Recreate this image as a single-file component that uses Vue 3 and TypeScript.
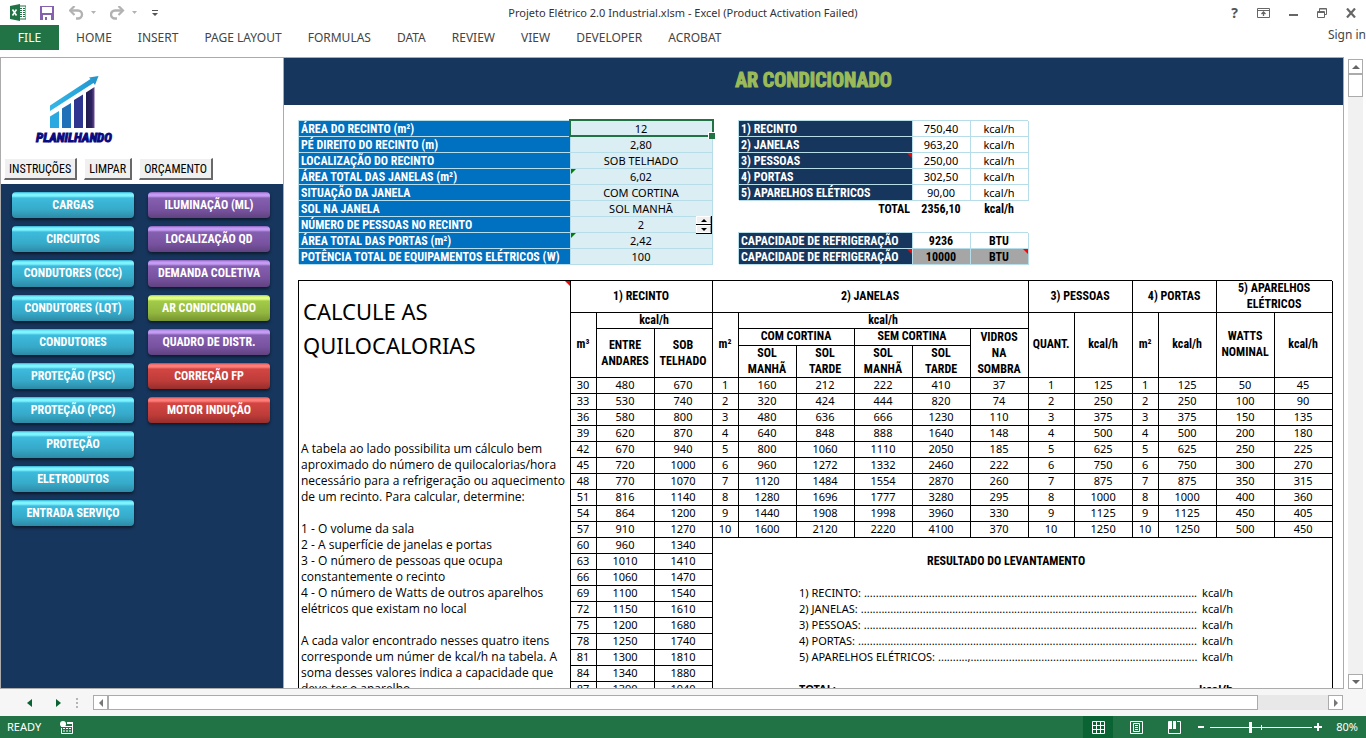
<script setup lang="ts">
import { ref } from 'vue'

const tabs = ['HOME', 'INSERT', 'PAGE LAYOUT', 'FORMULAS', 'DATA', 'REVIEW', 'VIEW', 'DEVELOPER', 'ACROBAT']

const blueLinks = [
  'CARGAS', 'CIRCUITOS', 'CONDUTORES (CCC)', 'CONDUTORES (LQT)', 'CONDUTORES',
  'PROTEÇÃO (PSC)', 'PROTEÇÃO (PCC)', 'PROTEÇÃO', 'ELETRODUTOS', 'ENTRADA SERVIÇO',
]
const otherLinks = [
  { label: 'ILUMINAÇÃO (ML)', tone: 'purple' },
  { label: 'LOCALIZAÇÃO QD', tone: 'purple' },
  { label: 'DEMANDA COLETIVA', tone: 'purple' },
  { label: 'AR CONDICIONADO', tone: 'green' },
  { label: 'QUADRO DE DISTR.', tone: 'purple' },
  { label: 'CORREÇÃO FP', tone: 'red' },
  { label: 'MOTOR INDUÇÃO', tone: 'red' },
]

const people = ref(2)
const zoom = ref(80)

const inputs = [
  { label: 'ÁREA DO RECINTO (m²)', value: '12', mark: 'selected' },
  { label: 'PÉ DIREITO DO RECINTO (m)', value: '2,80', mark: '' },
  { label: 'LOCALIZAÇÃO DO RECINTO', value: 'SOB TELHADO', mark: '' },
  { label: 'ÁREA TOTAL DAS JANELAS (m²)', value: '6,02', mark: 'flag' },
  { label: 'SITUAÇÃO DA JANELA', value: 'COM CORTINA', mark: '' },
  { label: 'SOL NA JANELA', value: 'SOL MANHÃ', mark: '' },
  { label: 'NÚMERO DE PESSOAS NO RECINTO', value: '', mark: 'spin' },
  { label: 'ÁREA TOTAL DAS PORTAS (m²)', value: '2,42', mark: 'flag' },
  { label: 'POTÊNCIA TOTAL DE EQUIPAMENTOS ELÉTRICOS (W)', value: '100', mark: '' },
]

const loads = [
  { label: '1) RECINTO', value: '750,40', note: false },
  { label: '2) JANELAS', value: '963,20', note: false },
  { label: '3) PESSOAS', value: '250,00', note: true },
  { label: '4) PORTAS', value: '302,50', note: false },
  { label: '5) APARELHOS ELÉTRICOS', value: '90,00', note: false },
]

const fullRows = [
  [30, 480, 670, 1, 160, 212, 222, 410, 37, 1, 125, 1, 125, 50, 45],
  [33, 530, 740, 2, 320, 424, 444, 820, 74, 2, 250, 2, 250, 100, 90],
  [36, 580, 800, 3, 480, 636, 666, 1230, 110, 3, 375, 3, 375, 150, 135],
  [39, 620, 870, 4, 640, 848, 888, 1640, 148, 4, 500, 4, 500, 200, 180],
  [42, 670, 940, 5, 800, 1060, 1110, 2050, 185, 5, 625, 5, 625, 250, 225],
  [45, 720, 1000, 6, 960, 1272, 1332, 2460, 222, 6, 750, 6, 750, 300, 270],
  [48, 770, 1070, 7, 1120, 1484, 1554, 2870, 260, 7, 875, 7, 875, 350, 315],
  [51, 816, 1140, 8, 1280, 1696, 1777, 3280, 295, 8, 1000, 8, 1000, 400, 360],
  [54, 864, 1200, 9, 1440, 1908, 1998, 3960, 330, 9, 1125, 9, 1125, 450, 405],
  [57, 910, 1270, 10, 1600, 2120, 2220, 4100, 370, 10, 1250, 10, 1250, 500, 450],
]
const shortRows = [
  [60, 960, 1340], [63, 1010, 1410], [66, 1060, 1470], [69, 1100, 1540], [72, 1150, 1610],
  [75, 1200, 1680], [78, 1250, 1740], [81, 1300, 1810], [84, 1340, 1880], [87, 1390, 1940],
]

const dots = (n: number) => '.'.repeat(n)
const survey = [
  { label: '1) RECINTO:', leader: dots(113) },
  { label: '2) JANELAS:', leader: dots(114) },
  { label: '3) PESSOAS:', leader: dots(113) },
  { label: '4) PORTAS:', leader: dots(115) },
  { label: '5) APARELHOS ELÉTRICOS:', leader: dots(10) + ',' + dots(77) },
]
</script>

<template>
  <div class="app">
    <header class="titlebar">
      <div class="quick">
        <svg class="ico-excel" width="16" height="17" viewBox="0 0 16 17" aria-hidden="true">
          <path d="M8 2h8v13H8z" fill="#fff" stroke="#217346" />
          <path d="M10 4.500h2M13 4.500h2M10 6.500h2M13 6.500h2M10 8.500h2M13 8.500h2M10 10.500h2M13 10.500h2M10 12.500h2M13 12.500h2" stroke="#217346" />
          <path d="M0 2 10 0v17L0 15z" fill="#217346" />
          <path d="M2.500 5.500l4 6M6.500 5.500l-4 6" stroke="#fff" stroke-width="1.600" />
        </svg>
        <button class="qa save" aria-label="Save">
          <svg width="14" height="14" viewBox="0 0 14 14"><path d="M0 0h14v14H0z" fill="#8661ae" /><path d="M2 1h10v6H2z" fill="#fff" /><path d="M3 9h8v5H3z" fill="#fff" /><path d="M5 11h2v3H5z" fill="#8661ae" /></svg>
        </button>
        <button class="qa undo" aria-label="Undo">
          <svg width="27" height="14" viewBox="0 0 27 14"><path d="M1.500 4.500h7.500a4 4 0 0 1 0 8H7" fill="none" stroke="#b2b2b2" stroke-width="2.400" /><path d="M5.500 0 1 4.500 5.500 9" fill="none" stroke="#b2b2b2" stroke-width="2.200" /><path d="M22 5h5l-2.500 3z" fill="#b2b2b2" /></svg>
        </button>
        <button class="qa redo" aria-label="Redo">
          <svg width="27" height="14" viewBox="0 0 27 14"><path d="M12.500 4.500H5a4 4 0 0 0 0 8h2" fill="none" stroke="#b2b2b2" stroke-width="2.400" /><path d="M8.500 0 13 4.500 8.500 9" fill="none" stroke="#b2b2b2" stroke-width="2.200" /><path d="M22 5h5l-2.500 3z" fill="#b2b2b2" /></svg>
        </button>
        <button class="qa" aria-label="Customize Quick Access Toolbar">
          <svg width="6" height="6" viewBox="0 0 6 6"><path d="M0 0h6v1H0zM0 3h6L3 6z" fill="#555" /></svg>
        </button>
      </div>
      <h1 class="doc">Projeto Elétrico 2.0 Industrial.xlsm - Excel (Product Activation Failed)</h1>
      <div class="winbtns">
        <button class="wb help" aria-label="Help">?</button>
        <button class="wb" aria-label="Ribbon display options">
          <svg width="13" height="10" viewBox="0 0 13 10"><path d="M.5.5h12v9H.5zM.5 2.500h12" fill="none" stroke="#666" /><path d="M6.500 4v4M4.500 6l2-2 2 2" fill="none" stroke="#666" stroke-width="1.300" /></svg>
        </button>
        <button class="wb" aria-label="Minimize">
          <svg width="9" height="10" viewBox="0 0 9 10"><path d="M0 6h9v2H0z" fill="#666" /></svg>
        </button>
        <button class="wb" aria-label="Restore">
          <svg width="10" height="10" viewBox="0 0 10 10"><path d="M2.500 3V.5h7v6H7.500M.5 3.500h7v6h-7zM.5 4.500h7M2.500 1h7" fill="none" stroke="#666" /></svg>
        </button>
        <button class="wb" aria-label="Close">
          <svg width="10" height="10" viewBox="0 0 10 10"><path d="M1 .5 9 9.500M9 .5 1 9.500" stroke="#666" stroke-width="2.200" /></svg>
        </button>
      </div>
    </header>

    <nav class="ribbon">
      <button class="file">FILE</button>
      <button v-for="t in tabs" :key="t" class="tab">{{ t }}</button>
      <a class="signin" href="#">Sign in</a>
    </nav>

    <main class="work">
      <section class="window">
        <aside class="side">
          <div class="brand">
            <svg class="logo" width="76" height="68" viewBox="0 0 76 68" role="img" aria-label="Planilhando">
              <defs>
                <linearGradient id="arrow" x1="0" x2="1"><stop offset="0" stop-color="#35b6e6" /><stop offset=".6" stop-color="#27a4dc" /><stop offset="1" stop-color="#2592c8" /></linearGradient>
                <linearGradient id="b4" x1="0" x2="1"><stop offset="0" stop-color="#211a4e" /><stop offset=".65" stop-color="#2b2360" /><stop offset="1" stop-color="#6d4a92" /></linearGradient>
              </defs>
              <path d="M14 29.500 54.500 3 53 1.500 62.500 0 59 9l-1.500-2L14 35z" fill="url(#arrow)" />
              <path d="M14 40.500l9-5.500v17h-9z" fill="#2aa9e0" />
              <path d="M26 32.500l9-5.500v25h-9z" fill="#1f70b8" />
              <path d="M38 24l9-5.500v33.500h-9z" fill="#2e3590" />
              <path d="M50 16.500l8.500-5.500v41H50z" fill="url(#b4)" />
              <text x="0" y="66" class="wordmark">PLANILHANDO</text>
            </svg>
            <div class="tools">
              <button>INSTRUÇÕES</button>
              <button>LIMPAR</button>
              <button>ORÇAMENTO</button>
            </div>
          </div>
          <div class="links">
            <div class="stack">
              <button v-for="b in blueLinks" :key="b" class="pill blue">{{ b }}</button>
            </div>
            <div class="stack">
              <button v-for="b in otherLinks" :key="b.label" class="pill" :class="b.tone">{{ b.label }}</button>
            </div>
          </div>
        </aside>

        <div class="sheet">
          <h2 class="banner">AR CONDICIONADO</h2>
          <div class="body">
            <div class="top">
              <table class="inputs">
                <tbody>
                  <tr v-for="r in inputs" :key="r.label">
                    <th scope="row">{{ r.label }}</th>
                    <td :class="r.mark">
                      <template v-if="r.mark === 'spin'">
                        {{ people }}
                        <span class="spinner">
                          <button aria-label="Aumentar" @click="people++"><i class="up"></i></button>
                          <button aria-label="Diminuir" @click="people--"><i class="down"></i></button>
                        </span>
                      </template>
                      <template v-else>{{ r.value }}</template>
                    </td>
                  </tr>
                </tbody>
              </table>
              <div class="outputs">
                <table class="loads">
                  <tbody>
                    <tr v-for="l in loads" :key="l.label">
                      <th scope="row" :class="{ note: l.note }">{{ l.label }}</th>
                      <td>{{ l.value }}</td>
                      <td>kcal/h</td>
                    </tr>
                  </tbody>
                  <tfoot>
                    <tr><th scope="row">TOTAL</th><td>2356,10</td><td>kcal/h</td></tr>
                  </tfoot>
                </table>
                <table class="loads capacity">
                  <tbody>
                    <tr><th scope="row">CAPACIDADE DE REFRIGERAÇÃO</th><td>9236</td><td>BTU</td></tr>
                    <tr class="final"><th scope="row" class="note">CAPACIDADE DE REFRIGERAÇÃO</th><td>10000</td><td class="note">BTU</td></tr>
                  </tbody>
                </table>
              </div>
            </div>

            <table class="calc">
              <colgroup>
                <col class="c-text"><col class="c-s"><col class="c-m"><col class="c-m"><col class="c-s"><col class="c-m"><col class="c-m"><col class="c-m"><col class="c-m"><col class="c-m"><col class="c-q"><col class="c-m"><col class="c-s"><col class="c-m"><col class="c-m"><col class="c-m">
              </colgroup>
              <tbody>
                <tr class="tall">
                  <td class="explain note" rowspan="25">
                    <h3>CALCULE AS<br>QUILOCALORIAS</h3>
                    <p>A tabela ao lado possibilita um cálculo bem<br>aproximado do número de quilocalorias/hora<br>necessário para a refrigeração ou aquecimento<br>de um recinto. Para calcular, determine:</p>
                    <p>1 - O volume da sala<br>2 - A superfície de janelas e portas<br>3 - O número de pessoas que ocupa<br>constantemente o recinto<br>4 - O número de Watts de outros aparelhos<br>elétricos que existam no local</p>
                    <p>A cada valor encontrado nesses quatro itens<br>corresponde um númer de kcal/h na tabela. A<br>soma desses valores indica a capacidade que<br>deve ter o aparelho.</p>
                  </td>
                  <th colspan="3">1) RECINTO</th>
                  <th colspan="6">2) JANELAS</th>
                  <th colspan="2">3) PESSOAS</th>
                  <th colspan="2">4) PORTAS</th>
                  <th colspan="2">5) APARELHOS<br>ELÉTRICOS</th>
                </tr>
                <tr>
                  <th rowspan="4">m³</th>
                  <th colspan="2">kcal/h</th>
                  <th rowspan="4">m²</th>
                  <th colspan="5">kcal/h</th>
                  <th rowspan="4">QUANT.</th>
                  <th rowspan="4">kcal/h</th>
                  <th rowspan="4">m²</th>
                  <th rowspan="4">kcal/h</th>
                  <th rowspan="4">WATTS<br>NOMINAL</th>
                  <th rowspan="4">kcal/h</th>
                </tr>
                <tr>
                  <th rowspan="3">ENTRE<br>ANDARES</th>
                  <th rowspan="3">SOB<br>TELHADO</th>
                  <th colspan="2">COM CORTINA</th>
                  <th colspan="2">SEM CORTINA</th>
                  <th rowspan="3">VIDROS<br>NA<br>SOMBRA</th>
                </tr>
                <tr>
                  <th rowspan="2">SOL<br>MANHÃ</th>
                  <th rowspan="2">SOL<br>TARDE</th>
                  <th rowspan="2">SOL<br>MANHÃ</th>
                  <th rowspan="2">SOL<br>TARDE</th>
                </tr>
                <tr></tr>
                <tr v-for="row in fullRows" :key="row[0]">
                  <td v-for="(v, i) in row" :key="i">{{ v }}</td>
                </tr>
                <tr v-for="(row, n) in shortRows" :key="row[0]">
                  <td v-for="(v, i) in row" :key="i">{{ v }}</td>
                  <td v-if="n === 0" class="survey" colspan="12" rowspan="10">
                    <h4>RESULTADO DO LEVANTAMENTO</h4>
                    <div v-for="s in survey" :key="s.label" class="line">
                      <span>{{ s.label }}</span><span>{{ s.leader }}</span><span class="unit">kcal/h</span>
                    </div>
                    <div class="line total">
                      <span>TOTAL:</span><span>{{ dots(112) }}</span><span class="unit">kcal/h</span>
                    </div>
                  </td>
                </tr>
              </tbody>
            </table>
          </div>
        </div>
      </section>

      <div class="vscroll">
        <button aria-label="Scroll up"><i class="up"></i></button>
        <div class="thumb"></div>
        <button class="end" aria-label="Scroll down"><i class="down"></i></button>
      </div>
    </main>

    <div class="sheetbar">
      <button class="nav" aria-label="Previous sheet"><svg width="5" height="8" viewBox="0 0 5 8"><path d="M5 0v8L0 4z" fill="#0a6332" /></svg></button>
      <button class="nav" aria-label="Next sheet"><svg width="5" height="8" viewBox="0 0 5 8"><path d="M0 0v8l5-4z" fill="#0a6332" /></svg></button>
      <svg class="grip" width="2" height="10" viewBox="0 0 2 10" aria-hidden="true"><path d="M0 0h2v2H0zM0 4h2v2H0zM0 8h2v2H0z" fill="#b5b5b5" /></svg>
      <div class="hscroll">
        <button aria-label="Scroll left"><svg width="4" height="8" viewBox="0 0 4 8"><path d="M4 0v8L0 4z" fill="#777" /></svg></button>
        <div class="thumb"></div>
        <button class="end" aria-label="Scroll right"><svg width="4" height="8" viewBox="0 0 4 8"><path d="M0 0v8l4-4z" fill="#777" /></svg></button>
      </div>
    </div>

    <footer class="status">
      <span class="ready">READY</span>
      <button class="macro" aria-label="Record macro">
        <svg width="13" height="13" viewBox="0 0 13 13"><path d="M7 1.500h5.500v11h-11V7" fill="none" stroke="#fff" /><path d="M7 1h6v2H7zM1 5h12v1H1z" fill="#fff" /><circle cx="3" cy="3" r="3" fill="#fff" /><path d="M3 7.500h2M6 7.500h2M9 7.500h2M3 10h2M6 10h2M9 10h2" stroke="#fff" /></svg>
      </button>
      <button class="view on" aria-label="Normal">
        <svg width="13" height="13" viewBox="0 0 13 13"><path d="M.5.5h12v12H.5zM4.500 0v13M8.500 0v13M0 4.500h13M0 8.500h13" fill="none" stroke="#fff" /></svg>
      </button>
      <button class="view" aria-label="Page layout">
        <svg width="13" height="13" viewBox="0 0 13 13"><path d="M.5.5h12v12H.5zM3.500 2.500h6v8h-6zM5 4.500h3M5 6.500h3M5 8.500h3" fill="none" stroke="#fff" /></svg>
      </button>
      <button class="view" aria-label="Page break preview">
        <svg width="13" height="13" viewBox="0 0 13 13"><path d="M.5.5h12v12H.5z" fill="none" stroke="#fff" /><path d="M1 0h3v8H1zM5 0h3v8H5z" fill="#fff" /><path d="M4.500 0v9M8.500 0v8" stroke="#217346" /></svg>
      </button>
      <button class="step minus" aria-label="Zoom out"><svg width="6" height="6" viewBox="0 0 6 6"><path d="M0 2h6v2H0z" fill="#fff" /></svg></button>
      <input v-model.number="zoom" class="zoom" type="range" min="10" max="190" aria-label="Zoom">
      <button class="step" aria-label="Zoom in"><svg width="8" height="8" viewBox="0 0 8 8"><path d="M0 3h8v2H0zM3 0h2v8H3z" fill="#fff" /></svg></button>
      <span class="pct">{{ zoom }}%</span>
    </footer>
  </div>
</template>

<style>
body { margin: 0; overflow: hidden; }
</style>

<style scoped>
* { box-sizing: border-box; }
.app {
  display: flex;
  flex-direction: column;
  height: 100vh;
  background: #fff;
  color: #444;
  font: 12px/16px "Noto Sans", "Open Sans", sans-serif;
}
button { font: inherit; color: inherit; border: 0; padding: 0; margin: 0; background: none; }
h1, h2, h3, h4, p { margin: 0; font-weight: normal; }
svg { display: block; }

.titlebar { display: grid; grid-template-columns: 1fr auto 1fr; align-items: center; height: 25px; flex: none; }
.quick { display: flex; align-items: center; padding-left: 10px; }
.save { margin-left: 14px; }
.undo { margin-left: 15px; }
.redo { margin: 0 15px 0 14px; }
.doc { font-size: 11px; color: #333; }
.winbtns { display: flex; justify-content: flex-end; align-items: center; gap: 19px; padding-right: 10px; }
.wb { display: grid; place-items: center; }
.help { font-size: 14px; font-weight: bold; color: #555; }

.ribbon { display: flex; align-items: center; gap: 26px; height: 25px; flex: none; margin-bottom: 7px; }
.file { width: 59px; height: 25px; background: #217346; color: #fff; margin-right: -9px; }
.signin { margin-left: auto; align-self: flex-start; margin-top: 2px; color: #444; text-decoration: none; white-space: nowrap; }

.work { flex: 1; min-height: 0; display: flex; }
.window { flex: 1; min-width: 0; display: flex; border: 1px solid #ababab; overflow: hidden; }
.side { width: 283px; flex: none; border-right: 1px solid #ababab; display: flex; flex-direction: column; }
.brand { height: 126px; flex: none; display: flex; flex-direction: column; justify-content: space-between; padding: 18px 0 4px 3px; }
.logo { margin-left: 32px; overflow: visible; }
.wordmark { font: italic bold 13px "Roboto Condensed", "Liberation Sans", sans-serif; fill: #0a0a80; stroke: #0a0a80; }
.tools { display: flex; gap: 7px; color: #000; font-family: "Roboto Condensed", Roboto, sans-serif; font-size: 12px; }
.tools button { height: 22px; padding: 0 4px; background: #f0f0f0; border: 1px solid #fff; border-right: 2px solid #696969; border-bottom: 2px solid #696969; line-height: 18px; }
.links { flex: 1; background: #17365d; display: flex; gap: 14px; padding: 8px 11px; }
.stack { display: grid; grid-template-rows: repeat(10, 1fr); gap: 8px; width: 122px; height: 334px; }
.pill {
  border-radius: 4px;
  color: #fff;
  font-family: "Roboto Condensed", Roboto, sans-serif;
  font-size: 12px;
  font-weight: bold;
  white-space: nowrap;
  box-shadow: 0 2px 3px rgba(0, 0, 0, .5);
}
.blue { background: linear-gradient(#35b0cf 0, #7df4ff 2px, #7df4ff 4px, #3dbbdd 6px, #36a9c8 18px, #2d8aa6 100%); }
.purple { background: linear-gradient(#8a62b8 0, #c59cf5 2px, #c59cf5 4px, #8560b0 6px, #7852a0 18px, #60427f 100%); }
.green { background: linear-gradient(#a3c940 0, #e2ff85 2px, #e2ff85 4px, #a3cb49 6px, #92b63f 18px, #76932f 100%); }
.red { background: linear-gradient(#cc4340 0, #ff7d79 2px, #ff7d79 4px, #d24643 6px, #be3c39 18px, #962e2c 100%); }

.sheet { flex: 1; min-width: 0; overflow: hidden; color: #000; font-size: 11px; }
.banner {
  height: 47px;
  background: #17365d;
  color: #9bbb59;
  text-align: center;
  font: bold 20px/44px "Roboto Condensed", "Liberation Sans", sans-serif;
  -webkit-text-stroke: 1px #9bbb59;
}
.body { padding: 15px 10px 0 14px; }
.top { display: flex; gap: 26px; margin-bottom: 16px; }
table { border-spacing: 0; table-layout: fixed; line-height: 16px; }
th, td { padding: 0; height: 16px; text-align: center; white-space: nowrap; }
tr { height: 16px; }
th, tfoot td, .capacity td, h4 { font-family: "Roboto Condensed", Roboto, sans-serif; font-size: 12px; font-weight: bold; }

.inputs { width: 414px; }
.inputs th, .inputs td, .loads tbody th, .loads tbody td { box-shadow: inset 1px 1px #b7dee8, 1px 1px #b7dee8; }
.inputs th { width: 272px; background: #0070c0; color: #fff; text-align: left; padding-left: 3px; }
.inputs td { position: relative; background: #daeef3; }
.inputs td, .loads td { padding-top: 1px; line-height: 15px; }
.inputs th, .loads th, .loads tfoot td, .capacity td { padding-top: 2px; line-height: 14px; }
.inputs .selected::before { content: ""; position: absolute; inset: -1px -2px -1px -1px; border: 2px solid #217346; z-index: 1; }
.inputs .selected::after { content: ""; position: absolute; right: -3px; bottom: -3px; width: 6px; height: 6px; background: #217346; border: 1px solid #fff; border-width: 1px 0 0 1px; z-index: 1; }
.inputs .flag::after { content: ""; position: absolute; left: 1px; top: 1px; border-top: 5px solid #008000; border-right: 5px solid transparent; }
.spinner { position: absolute; right: 0; top: 0; width: 16px; height: 18px; display: grid; grid-template-rows: 1fr 1fr; z-index: 1; background: #000; gap: 1px; padding: 0 1px 1px 0; }
.spinner button { background: #f0f0f0; border: 1px solid #fff; border-right-color: #999; display: grid; place-items: center; }
.up { border: 3px solid transparent; border-top: 0; border-bottom-color: #000; }
.down { border: 3px solid transparent; border-bottom: 0; border-top-color: #000; }

.outputs { display: flex; flex-direction: column; gap: 16px; }
.loads { width: 290px; }
.loads th { width: 174px; color: #fff; text-align: left; padding-left: 3px; }
.loads tbody th { background: #17365d; }
.loads tfoot th { color: #000; text-align: right; padding-right: 2px; }
.final td { background: #a6a6a6; }
.note { position: relative; }
.note::after { content: ""; position: absolute; right: 0; top: 1px; border-top: 5px solid #f00; border-left: 5px solid transparent; }

.calc { width: 1034px; }
.calc th, .calc td { box-shadow: inset 1px 1px #000, 1px 1px #000; }
.calc .tall th { height: 32px; }
.c-text { width: 272px; }
.c-s { width: 26px; }
.c-m { width: 58px; }
.c-q { width: 46px; }
.calc .explain { text-align: left; vertical-align: top; padding: 14px 0 0 3px; }
.explain h3 { font-size: 22px; line-height: 34px; height: 147px; padding-left: 2px; }
.explain p { font-family: "Open Sans", "Noto Sans", sans-serif; font-size: 12px; }
.explain p + p { margin-top: 16px; }
.calc .survey { vertical-align: top; padding: 16px 99px 0 87px; text-align: left; }
.survey h4 { text-align: center; margin: 0 20px 16px 0; }
.line { display: flex; gap: 3px; }
.unit { margin-left: auto; }
.total { margin-top: 16px; font-weight: bold; }

.vscroll { width: 15px; margin: 2px 3px 0 4px; display: flex; flex-direction: column; background: #f1f1f1; }
.vscroll button, .hscroll button { width: 15px; height: 15px; background: #fff; border: 1px solid #ababab; display: grid; place-items: center; }
.vscroll .up { border-width: 0 4px 4px; border-bottom-color: #666; }
.vscroll .down { border-width: 4px 4px 0; border-top-color: #666; }
.vscroll .thumb { height: 23px; background: #fff; border: 1px solid #ababab; }
.end { margin-top: auto; }

.sheetbar { height: 27px; flex: none; background: #f6f6f6; display: flex; align-items: center; padding: 0 23px 0 27px; }
.nav { margin-right: 24px; }
.grip { margin-left: -9px; margin-right: 15px; }
.hscroll { flex: 1; display: flex; background: #e8e8e8; height: 15px; }
.hscroll .thumb { width: 92%; height: 15px; background: #fff; border: 1px solid #ababab; }
.hscroll .end { margin: 0 0 0 auto; }

.status { height: 22px; flex: none; background: #217346; color: #fff; display: flex; align-items: center; padding-right: 8px; font-size: 11px; }
.ready { padding-left: 7px; width: 60px; }
.macro { margin-right: auto; }
.view { width: 30px; height: 22px; margin-right: 8px; display: grid; place-items: center; }
.on { background: #0a6332; }
.minus { margin: 0 4px 0 1px; }
.zoom { appearance: none; width: 102px; height: 12px; margin: 0 2px; background: linear-gradient(#fff, #fff) 0 50% / 100% 1px no-repeat, linear-gradient(#fff, #fff) 51px 50% / 1px 5px no-repeat; }
.zoom::-webkit-slider-thumb { appearance: none; width: 3px; height: 11px; background: #fff; }
.pct { width: 36px; text-align: right; }
</style>
